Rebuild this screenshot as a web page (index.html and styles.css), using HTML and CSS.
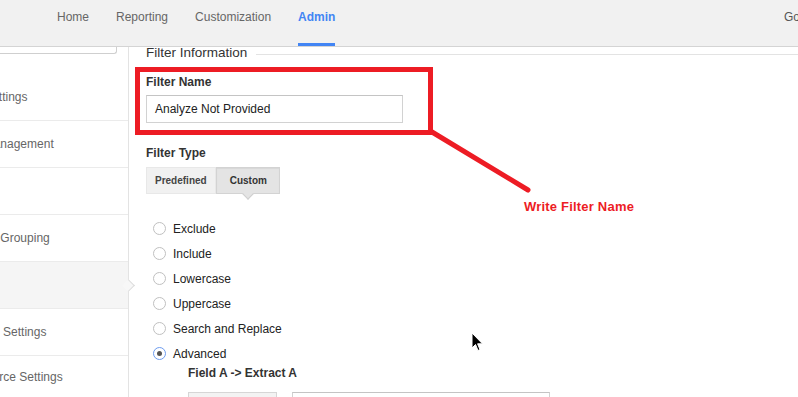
FILE: index.html
```html
<!DOCTYPE html>
<html>
<head>
<meta charset="utf-8">
<title>Filter</title>
<link rel="stylesheet" href="styles.css">
</head>
<body>
<header class="topbar">
  <nav class="nav">
    <a class="nav-item">Home</a>
    <a class="nav-item">Reporting</a>
    <a class="nav-item">Customization</a>
    <a class="nav-item active">Admin</a>
  </nav>
  <div class="account">Google Analytics</div>
</header>
<div class="page">
  <aside class="sidebar">
    <div class="sidebar-select"></div>
    <ul class="side-list">
      <li class="side-item"><span class="side-label">View Settings</span></li>
      <li class="side-item"><span class="side-label">User Management</span></li>
      <li class="side-item"><span class="side-label">Goals</span></li>
      <li class="side-item"><span class="side-label">Content Grouping</span></li>
      <li class="side-item current"><span class="side-label">Filters</span></li>
      <li class="side-item"><span class="side-label">Channel Settings</span></li>
      <li class="side-item last"><span class="side-label">Ecommerce Settings</span></li>
    </ul>
  </aside>
  <main class="content">
    <div class="legend"><span class="legend-text">Filter Information</span><span class="legend-line"></span></div>
    <div class="field-label">Filter Name</div>
    <div class="text-input">Analyze Not Provided</div>
    <div class="field-label type-label">Filter Type</div>
    <div class="btn-group">
      <span class="seg">Predefined</span>
      <span class="seg selected">Custom</span>
    </div>
    <ul class="radios">
      <li class="radio-row"><span class="radio"></span><span class="radio-label">Exclude</span></li>
      <li class="radio-row"><span class="radio"></span><span class="radio-label">Include</span></li>
      <li class="radio-row"><span class="radio"></span><span class="radio-label">Lowercase</span></li>
      <li class="radio-row"><span class="radio"></span><span class="radio-label">Uppercase</span></li>
      <li class="radio-row"><span class="radio"></span><span class="radio-label">Search and Replace</span></li>
      <li class="radio-row"><span class="radio checked"></span><span class="radio-label">Advanced</span></li>
    </ul>
    <div class="sub-label">Field A -&gt; Extract A</div>
    <div class="extract-row">
      <span class="select-box"></span>
      <span class="text-box"></span>
    </div>
  </main>
</div>

<svg class="markup" width="798" height="397" viewBox="0 0 798 397">
  <rect x="137.5" y="69.5" width="293" height="63" fill="none" stroke="#ed1c24" stroke-width="5"/>
  <line x1="432" y1="132" x2="528" y2="190" stroke="#ed1c24" stroke-width="5" stroke-linecap="round"/>
</svg>
<div class="note">Write Filter Name</div>
<svg class="cursor" width="13" height="21" viewBox="0 0 13 21">
  <path d="M1 1 L1 16 L4.5 12.5 L7 18.5 L9 17.6 L6.6 11.8 L11.5 11.8 Z" fill="#000" stroke="#fff" stroke-width="1" stroke-linejoin="round"/>
</svg>
</body>
</html>
```
FILE: styles.css
```css
* { box-sizing: border-box; }
html, body {
  margin: 0;
  padding: 0;
  background: #fff;
  font-family: "Liberation Sans", Arial, sans-serif;
  font-size: 12px;
  color: #333;
  overflow: hidden;
}
.topbar {
  height: 47px;
  background: #f1f1f1;
  border-bottom: 1px solid #d4d4d4;
  display: flex;
  overflow: hidden;
  white-space: nowrap;
}
.nav {
  display: flex;
  gap: 27px;
  padding-left: 57px;
}
.nav-item {
  height: 46px;
  padding-top: 10px;
  line-height: 14px;
  color: #666;
  font-size: 12px;
}
.nav-item.active {
  color: #4285f4;
  font-weight: bold;
  border-bottom: 3px solid #4285f4;
}
.account {
  margin-left: auto;
  width: 14px;
  padding-top: 10px;
  line-height: 14px;
  color: #555;
  overflow: visible;
}
.page {
  display: flex;
  height: 350px;
}
.sidebar {
  width: 129px;
  flex: none;
  border-right: 1px solid #e3e3e3;
  position: relative;
}
.sidebar-select {
  width: 117px;
  height: 7px;
  border: 1px solid #cfcfcf;
  border-top: none;
  border-left: none;
  border-radius: 0 0 3px 0;
  margin-bottom: 20px;
}
.side-list {
  list-style: none;
  margin: 0;
  padding: 0;
}
.side-item {
  height: 47px;
  border-bottom: 1px solid #ebebeb;
  display: flex;
  align-items: center;
  position: relative;
  color: #666;
  font-size: 12px;
}
.side-item.last {
  align-items: flex-start;
  padding-top: 14px;
}
.side-label {
  display: block;
  width: 100%;
  overflow: hidden;
  white-space: nowrap;
  text-indent: -45px;
  line-height: 14px;
}
.side-item.last .side-label {
  text-indent: -48px;
}
.side-item.current {
  background: #f5f5f5;
}
.side-item.current::after {
  content: "";
  position: absolute;
  left: 124px;
  top: 19px;
  width: 8px;
  height: 8px;
  background: #f7f7f7;
  border-top: 1px solid #dcdcdc;
  border-right: 1px solid #dcdcdc;
  transform: rotate(45deg);
  z-index: 2;
}
.content {
  flex: 1;
  padding-left: 17px;
  min-width: 0;
}
.legend {
  display: flex;
  height: 15px;
  margin-top: -2px;
}
.legend-text {
  font-size: 13.5px;
  line-height: 15px;
  color: #333;
}
.legend-line {
  flex: 1;
  height: 1px;
  background: #e3e3e3;
  margin-left: 9px;
  margin-top: 9px;
}
.field-label {
  margin-top: 15px;
  font-weight: bold;
  line-height: 14px;
  color: #333;
}
.text-input {
  margin-top: 6px;
  width: 257px;
  height: 28px;
  border: 1px solid #d2d2d2;
  border-top-color: #c4c4c4;
  padding-left: 8px;
  line-height: 26px;
  color: #222;
}
.type-label {
  margin-top: 23px;
}
.btn-group {
  margin-top: 7px;
  display: flex;
  height: 27px;
}
.seg {
  display: flex;
  align-items: center;
  font-size: 10px;
  font-weight: bold;
  color: #444;
  background: #f1f1f1;
  border: 1px solid #e8e8e8;
  padding: 0 8px;
  position: relative;
}
.seg.selected {
  background: #e4e4e4;
  border-color: #d3d3d3;
  padding: 0 12px 0 13px;
  color: #333;
  box-shadow: inset 0 1px 1px rgba(0,0,0,0.06);
}
.seg.selected::after {
  content: "";
  position: absolute;
  left: 50%;
  bottom: -5px;
  width: 7px;
  height: 7px;
  margin-left: -4px;
  background: #e4e4e4;
  border-right: 1px solid #cfcfcf;
  border-bottom: 1px solid #cfcfcf;
  transform: rotate(45deg);
}
.radios {
  list-style: none;
  margin: 22px 0 0 0;
  padding: 0;
}
.radio-row {
  height: 25px;
  display: flex;
  align-items: center;
  padding-left: 7px;
}
.radio {
  width: 13px;
  height: 13px;
  border: 1px solid #c0c0c0;
  border-radius: 50%;
  background: #fff;
  display: flex;
  align-items: center;
  justify-content: center;
}
.radio.checked {
  border-color: #6d9cf0;
}
.radio.checked::after {
  content: "";
  width: 5px;
  height: 5px;
  border-radius: 50%;
  background: #555;
}
.radio-label {
  margin-left: 7px;
  line-height: 14px;
  color: #222;
}
.sub-label {
  margin-left: 42px;
  font-weight: bold;
  line-height: 14px;
  color: #333;
}
.extract-row {
  margin-top: 12px;
  margin-left: 42px;
  display: flex;
  gap: 15px;
}
.select-box {
  width: 89px;
  height: 28px;
  background: #f3f3f3;
  border: 1px solid #d6d6d6;
}
.text-box {
  width: 258px;
  height: 28px;
  border: 1px solid #d2d2d2;
  border-top-color: #c4c4c4;
}
.markup {
  position: absolute;
  left: 0;
  top: 0;
  pointer-events: none;
}
.note {
  position: absolute;
  left: 524px;
  top: 199px;
  font-family: "Liberation Sans", Arial, sans-serif;
  font-size: 13px;
  font-weight: bold;
  line-height: 16px;
  letter-spacing: 0.2px;
  color: #ed1c24;
}
.cursor {
  position: absolute;
  left: 471px;
  top: 332px;
}
```
